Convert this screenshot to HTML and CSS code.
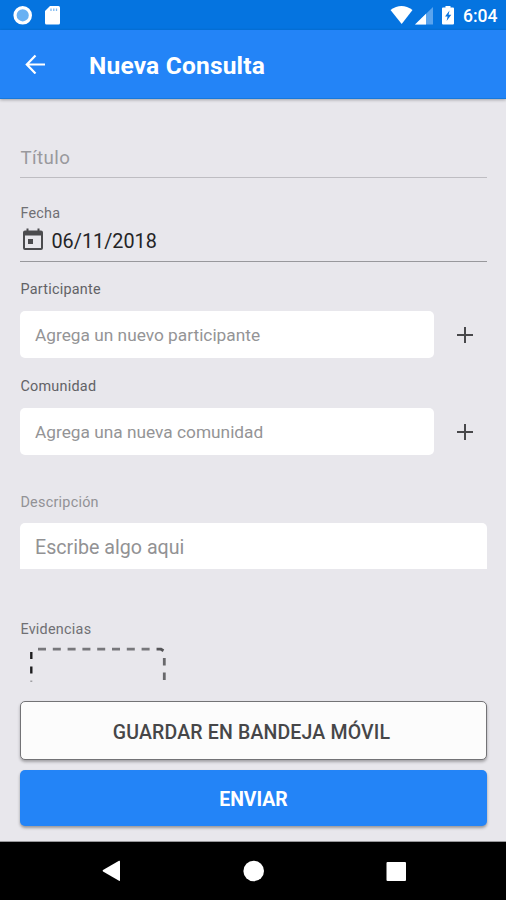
FILE: index.html
```html
<!DOCTYPE html>
<html lang="es">
<head>
<meta charset="utf-8">
<title>Nueva Consulta</title>
<link rel="stylesheet" href="styles.css">
</head>
<body>
<div class="status">
  <svg class="status-left" width="64" height="30" viewBox="0 0 64 30">
    <circle cx="22.7" cy="15.3" r="7.7" fill="#69b1f3" stroke="#fff" stroke-width="3.2"/>
    <path d="M50 6h8.500q1.500 0 1.500 1.500V23q0 1.500-1.500 1.500H46.500Q45 24.500 45 23V11z" fill="#fff"/>
    <path d="M51 8.500v2.500M53.800 8.500v2.500M56.500 8.500v2.500" stroke="#7db8f0" stroke-width="1.300"/>
  </svg>
  <svg class="status-right" width="70" height="30" viewBox="388 0 70 30">
    <path d="M390.500 10q11-8 22 0L401.700 24z" fill="#fff"/>
    <path d="M415 24.500L433 7v17.500z" fill="#5aa4ee"/>
    <path d="M415 24.500L426 13.800v10.700z" fill="#fff"/>
    <path d="M443 7.500h2.500V6h5v1.500h2.500q1 0 1 1v15q0 1-1 1h-10q-1 0-1-1v-15q0-1 1-1z" fill="#fff"/>
    <path d="M449.500 10.500l-4.500 6h2.600l-1 4.500 4.700-6.200h-2.700z" fill="#0874e0"/>
  </svg>
  <span class="clock">6:04</span>
</div>
<header class="appbar">
  <svg width="22" height="20" viewBox="0 0 22 20" fill="none" stroke="#fff" stroke-width="2.200"><path d="M20 10.500H2.500M10.500 1.500L1.800 10.500l8.700 9"/></svg>
  <h1><span>Nueva Consulta</span></h1>
</header>
<main class="form">
  <div class="title-field"><span>Título</span></div>
  <div class="label fecha"><span>Fecha</span></div>
  <div class="date-field">
    <svg width="22" height="24" viewBox="0 0 22 24"><path fill="#4b4b4e" fill-rule="evenodd" d="M4.500 0.500h2v2h9v-2h2v2h1.500Q21 2.500 21 4.500v15.500q0 2-2 2H3q-2 0-2-2V4.500q0-2 2-2h1.500zM3 7.500v12.500h16V7.500zM6 11h5v5H6z"/></svg>
    <span class="date">06/11/2018</span>
  </div>
  <div class="label participante"><span>Participante</span></div>
  <div class="row">
    <div class="input"><span>Agrega un nuevo participante</span></div>
    <svg class="plus" width="16" height="16" viewBox="0 0 16 16"><path d="M0 8h16M8 0v16" stroke="#48484b" stroke-width="2"/></svg>
  </div>
  <div class="label comunidad"><span>Comunidad</span></div>
  <div class="row">
    <div class="input"><span>Agrega una nueva comunidad</span></div>
    <svg class="plus" width="16" height="16" viewBox="0 0 16 16"><path d="M0 8h16M8 0v16" stroke="#48484b" stroke-width="2"/></svg>
  </div>
  <div class="label descripcion"><span>Descripción</span></div>
  <div class="textarea"><span>Escribe algo aqui</span></div>
  <div class="label evidencias"><span>Evidencias</span></div>
  <svg class="dropzone" width="138" height="36" viewBox="29 647 138 36" fill="none">
    <path d="M38 649.200H157" stroke="#77777b" stroke-width="2.800" stroke-dasharray="8 6.800"/>
    <path d="M157 649.200h4l2.500 1.500" stroke="#555558" stroke-width="2.800"/>
    <path d="M31.300 652v7M31.300 666.500v7" stroke="#1d1d1f" stroke-width="2.400"/>
    <path d="M31.300 680.500v1.500" stroke="#a0a0a4" stroke-width="2"/>
    <path d="M164.300 658v7.500M164.300 672.500v7.500" stroke="#68686b" stroke-width="2.800"/>
  </svg>
</main>
<footer class="actions">
  <div class="btn save"><span>GUARDAR EN BANDEJA MÓVIL</span></div>
  <div class="btn send"><span>ENVIAR</span></div>
</footer>
<nav class="navbar">
  <svg width="506" height="58" viewBox="0 842 506 58" fill="#fff">
    <path d="M120 861.300v19q0 1-1 .5l-16-9.300q-.8-.7 0-1.400l16-9.300q1-.5 1 .5z"/>
    <circle cx="253.700" cy="871" r="10.300"/>
    <rect x="386.500" y="862" width="19.500" height="19" rx="1"/>
  </svg>
</nav>
</body>
</html>
```

FILE: styles.css
```css
* { box-sizing: border-box; }
body {
  margin: 0;
  width: 506px;
  height: 900px;
  overflow: hidden;
  display: flex;
  flex-direction: column;
  background: #e8e7ec;
  font-family: Roboto, "Liberation Sans", sans-serif;
  white-space: nowrap;
}
svg { display: block; flex: none; }
.status {
  height: 30px;
  display: flex;
  align-items: center;
  background: #0574e0;
  color: #fff;
}
.status-right { margin-left: 324px; }
.clock {
  margin-left: 5px;
  padding-top: 2px;
  font-size: 17.5px;
  font-weight: 500;
}
.appbar {
  height: 69px;
  flex: none;
  display: flex;
  align-items: center;
  padding-left: 25px;
  background: #2384f7;
  border-bottom: 1px solid #1779dc;
  box-shadow: 0 1px 3px rgba(0, 0, 0, .3);
  color: #fff;
}
.appbar h1 {
  margin: 3px 0 0 42px;
  font-size: 24.5px;
  letter-spacing: .2px;
  line-height: 30px;
  font-weight: 700;
}
.form {
  height: 583px;
  flex: none;
  padding: 46px 19px 0 20px;
  overflow: hidden;
}
.title-field {
  height: 33px;
  padding-left: .5px;
  line-height: 26px;
  border-bottom: 1px solid #bebdc2;
  font-size: 18.7px;
  letter-spacing: .4px;
  color: #99999d;
}
.label {
  height: 20px;
  padding-left: .4px;
  font-size: 14.4px;
  line-height: 22px;
  letter-spacing: .25px;
  color: #707074;
}
.fecha { margin-top: 25px; }
.date-field {
  height: 39px;
  display: flex;
  gap: 7.5px;
  padding: 5px 0 0 2px;
  border-bottom: 1px solid #98989c;
  font-size: 19.8px;
  line-height: 24px;
  color: #242426;
}
.date { padding-top: 2px; }
.participante { margin-top: 17px; }
.participante, .comunidad { color: #626266; }
.row {
  margin-top: 12px;
  height: 47px;
  display: flex;
  align-items: center;
}
.input {
  width: 413.5px;
  height: 47px;
  padding-left: 15px;
  border-radius: 5px;
  background: #fff;
  font-size: 17.3px;
  line-height: 48px;
  color: #949496;
}
.plus { margin-left: 23.5px; }
.comunidad { margin-top: 18px; }
.descripcion { margin-top: 37px; color: #929296; }
.textarea {
  margin-top: 11px;
  height: 46px;
  padding-left: 15px;
  border-radius: 5px 5px 0 0;
  background: #fff;
  font-size: 19.65px;
  line-height: 50px;
  color: #929294;
}
.evidencias { margin-top: 50px; }
.dropzone { margin: 8px 0 0 9px; }
.actions {
  height: 160px;
  flex: none;
  padding: 19px 19px 0 20px;
  border-bottom: 1px solid #98989b;
}
.btn {
  display: flex;
  align-items: center;
  justify-content: center;
  border-radius: 5px;
}
.save {
  height: 59px;
  padding: 4px 4px 0 0;
  background: #fcfcfc;
  border: 1px solid #737376;
  box-shadow: 0 2px 3px rgba(0, 0, 0, .3);
  color: #464648;
  font-size: 19.5px;
  letter-spacing: .16px;
  font-weight: 500;
}
.send {
  margin-top: 10px;
  height: 56px;
  padding-top: 3px;
  background: #2384f7;
  box-shadow: 0 2px 3px rgba(0, 0, 0, .35);
  color: #fff;
  font-size: 19.4px;
  font-weight: 700;
}
.navbar {
  height: 58px;
  flex: none;
  background: #000;
}
```
